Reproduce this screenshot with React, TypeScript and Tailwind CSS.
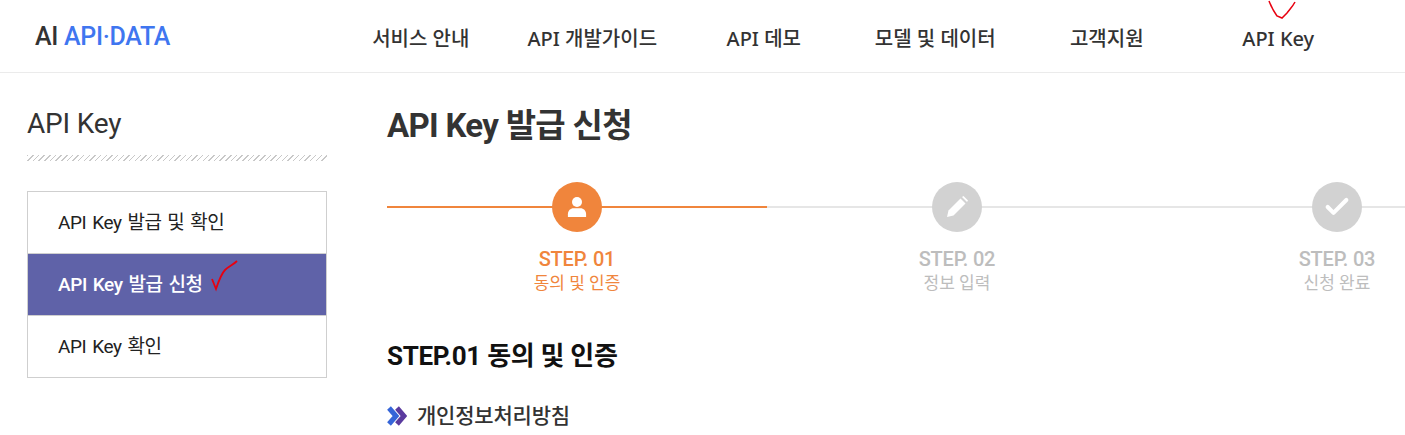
import { Check } from "lucide-react";

const font = { fontFamily: "Roboto, 'Noto Sans CJK KR', sans-serif" };

const navItems = ["서비스 안내", "API 개발가이드", "API 데모", "모델 및 데이터", "고객지원", "API Key"];

const steps = [
  { label: "STEP. 01", desc: "동의 및 인증", icon: "user", active: true },
  { label: "STEP. 02", desc: "정보 입력", icon: "pencil", active: false },
  { label: "STEP. 03", desc: "신청 완료", icon: "check", active: false },
];

function StepIcon({ icon }: { icon: string }) {
  if (icon === "user") {
    return (
      <svg width="20" height="22" viewBox="0 0 22 24" fill="white">
        <circle cx="11" cy="6.5" r="5.500" />
        <path d="M1 23v-3c0-4 3-6.500 6-6.500h8c3 0 6 2.500 6 6.500v3z" />
      </svg>
    );
  }
  if (icon === "pencil") {
    return (
      <svg width="24" height="24" viewBox="0 0 24 24" fill="white">
        <path d="M2 22l1.500-6.500L15.500 3.500l5 5L8.500 20.500z" />
        <path d="M17 2l1.500-1 4.500 4.500-1 1.500z" />
      </svg>
    );
  }
  return <Check size={28} color="white" strokeWidth={3.5} />;
}

export default function App() {
  return (
    <div className="w-[1405px] h-[435px] overflow-hidden bg-white relative" style={font}>
      {/* Header */}
      <header className="h-[73px] border-b border-[#ebebeb] flex items-center">
        <div className="w-[335px] pl-[35px] pt-[1px] text-[25px] leading-[36px] font-medium tracking-[-0.3px] text-[#333]">
          AI <span className="text-[#3f76f0]">API·DATA</span>
        </div>
        <nav className="flex w-[1029px] pt-[6px]">
          {navItems.map((item) => (
            <a
              key={item}
              className="flex-1 text-center text-[20px] font-medium text-[#333] font-['Noto_Sans','Noto_Sans_CJK_KR',sans-serif]"
            >
              {item}
            </a>
          ))}
        </nav>
      </header>

      {/* red pen mark on the nav */}
      <svg className="absolute left-[1268px] top-0" width="30" height="20" viewBox="0 0 30 20" fill="none">
        <path d="M1 1C3 6 6 12 9 16L14 18L19 13C22 9 25 6 27 2" stroke="#e8000f" strokeWidth="1.500" />
      </svg>

      <div className="flex">
        {/* Sidebar */}
        <aside className="w-[300px] ml-[27px] mr-[60px] shrink-0">
          <h2 className="mt-[31px] text-[28px] leading-[40px] text-[#333] tracking-[-0.2px]">API Key</h2>
          <div className="mt-[11px] h-[6px] bg-[repeating-linear-gradient(135deg,#c8c8c8_0px,#c8c8c8_1px,#ffffff_1px,#ffffff_4px)]" />
          <ul className="mt-[30px] border border-[#cfcfcf] text-[19px] tracking-[-0.4px] [word-spacing:1.5px] text-[#222]">
            <li className="h-[61px] pl-[30px] pt-[2px] flex items-center">API Key 발급 및 확인</li>
            <li className="h-[63px] pl-[30px] pt-[2px] flex items-center border-y border-[#cfcfcf] bg-[#5f62a8] text-white font-medium relative">
              API Key 발급 신청
              <svg className="absolute left-[183px] top-[6px]" width="30" height="32" viewBox="0 0 30 32" fill="none">
                <path d="M1 19L5 29C8 20 10 14 14 10C18 6 22 5 26 1" stroke="#e8000f" strokeWidth="1.800" />
              </svg>
            </li>
            <li className="h-[61px] pl-[30px] pt-[2px] flex items-center">API Key 확인</li>
          </ul>
        </aside>

        {/* Main */}
        <main className="flex-1 min-w-0">
          <h1 className="mt-[31px] text-[33px] leading-[44px] font-bold text-[#333] tracking-[-0.7px]">API Key 발급 신청</h1>
          <ol className="flex w-[1140px] mt-[34px]">
            {steps.map((step) => (
              <li key={step.label} className="w-[380px] flex flex-col items-center relative">
                <div className={`absolute left-0 right-0 top-[24px] h-[2px] ${step.active ? "bg-[#f0853c]" : "bg-[#e6e6e6]"}`} />
                <div className={`relative w-[50px] h-[50px] rounded-full flex items-center justify-center ${step.active ? "bg-[#f0853c]" : "bg-[#d2d2d2]"}`}>
                  <StepIcon icon={step.icon} />
                </div>
                <div className={`mt-[14px] text-[20px] leading-[26px] font-medium tracking-[-0.2px] ${step.active ? "text-[#f0853c]" : "text-[#bdbdbd]"}`}>{step.label}</div>
                <div className={`text-[17px] leading-[22px] ${step.active ? "text-[#f0853c]" : "text-[#bdbdbd]"}`}>{step.desc}</div>
              </li>
            ))}
          </ol>
          <h3 className="mt-[45px] text-[26px] leading-[34px] font-bold text-[#111] tracking-[-0.3px]">STEP.01 동의 및 인증</h3>
          <div className="mt-[29px] flex items-center gap-[10px] text-[21px] leading-[28px] text-[#333] font-medium tracking-[-0.2px]">
            <svg width="20" height="20" viewBox="0 0 20 20" fill="none" strokeWidth="5">
              <path d="M10 2l7 8-7 8" stroke="#5a3a9e" />
              <path d="M2 2l7 8-7 8" stroke="#3565d8" />
            </svg>
            개인정보처리방침
          </div>
        </main>
      </div>
    </div>
  );
}
